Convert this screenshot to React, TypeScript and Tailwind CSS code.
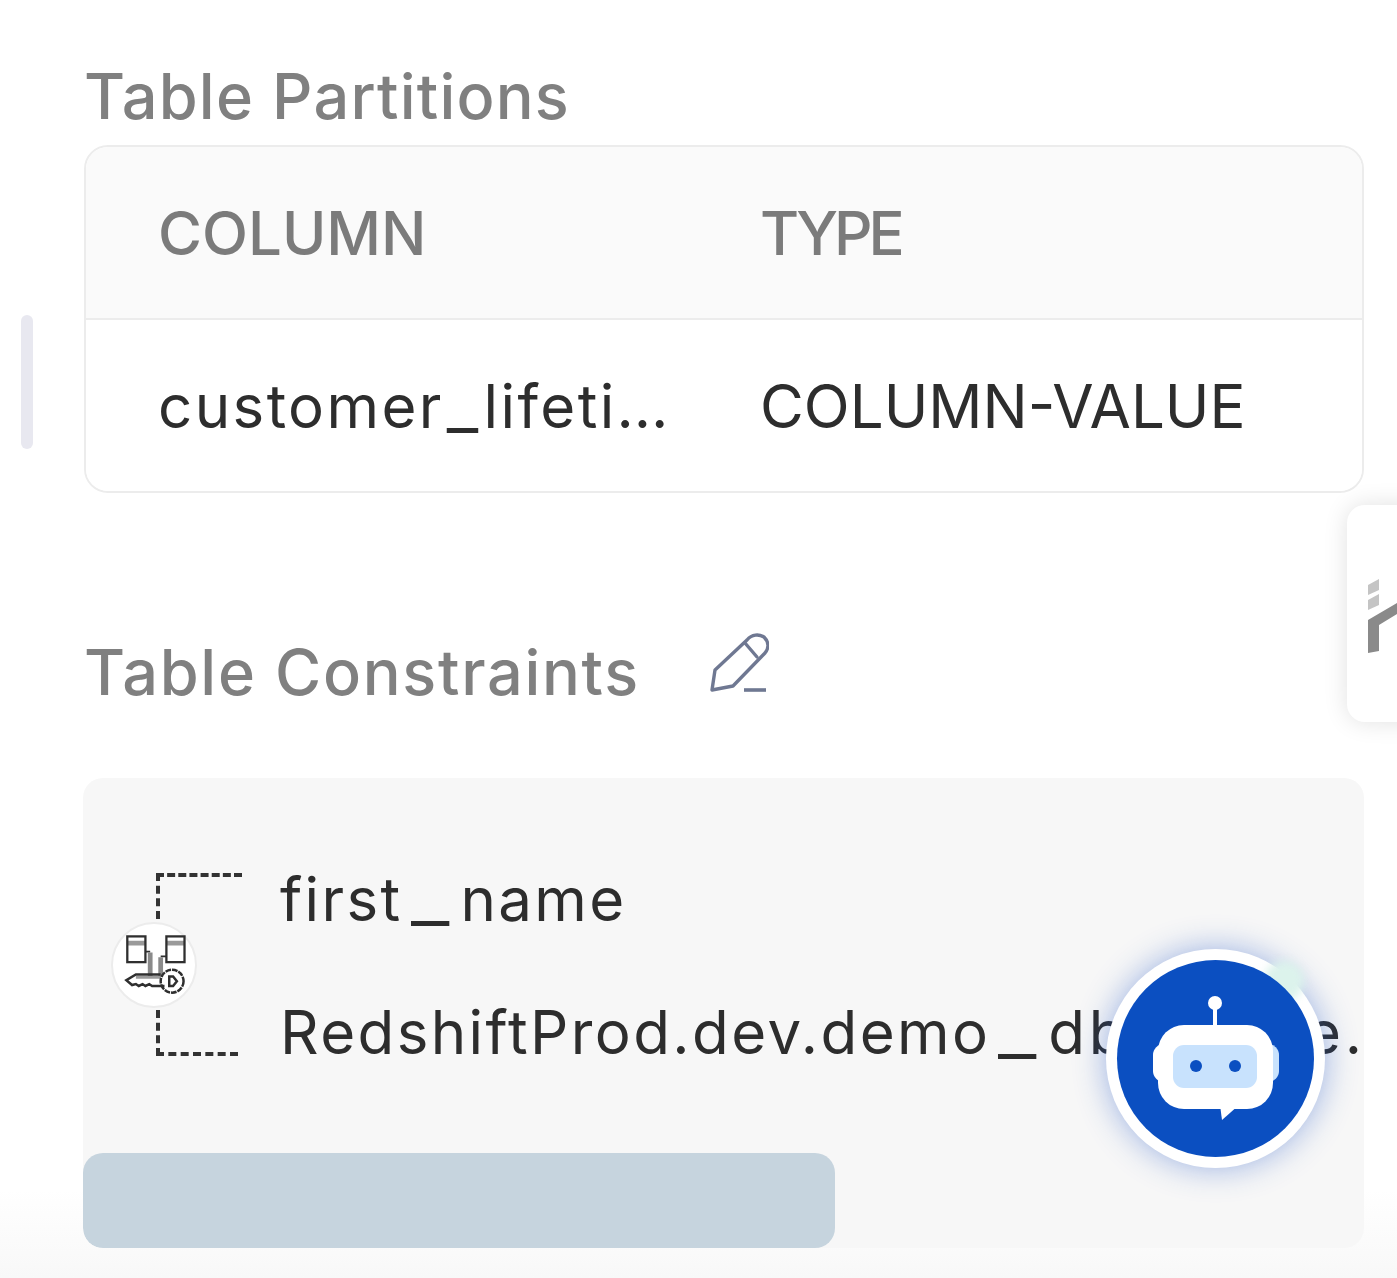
import React from 'react';

const font = "font-['Inter',sans-serif]";

const Underscore = () => <span className="inline-block mx-[14px] scale-x-[1.4]">_</span>;

const KeyIcon = () => (
  <svg viewBox="0 0 86 86" className="w-[86px] h-[86px]" fill="none" stroke="#2f2f2f" strokeWidth="2.4">
    {/* tables */}
    <path d="M15 20h19M56 20h19" stroke="#9a9a9a" strokeWidth="5" />
    <rect x="15" y="13" width="19" height="27" />
    <rect x="56" y="13" width="19" height="27" />
    {/* wires */}
    <path d="M34 29h5M56 34h-6" strokeWidth="2" />
    <path d="M39 30v25M50 35v20" stroke="#8a8a8a" strokeWidth="5" />
    {/* key */}
    <path d="M50 53H24L14 59l6 5 4-1 3 2 4-2 3 2 4-2 3 2h13" strokeWidth="2.6" />
    <path d="M24 56H50" stroke="#9a9a9a" strokeWidth="3" />
    <circle cx="62" cy="60" r="12" strokeWidth="2.6" strokeDasharray="6 1" />
    <path d="M59 55h4l4 5-4 5h-4z" strokeWidth="2.6" />
  </svg>
);

const PencilIcon = () => (
  <svg viewBox="0 0 60 62" className="w-[60px] h-[62px]" fill="none" stroke="#6f7892" strokeWidth="3.4" strokeLinejoin="round" strokeLinecap="round">
    <path d="M3 57L6 37L38 7C43 1 50 1 55 4C60 9 60 15 56 20L24 53Z" />
    <path d="M36 10L48 24" />
    <path d="M35 57H57" strokeWidth="3.6" strokeLinecap="butt" />
  </svg>
);

const BotIcon = () => (
  <svg viewBox="0 0 197 197" className="w-[197px] h-[197px]">
    {/* antenna */}
    <circle cx="98" cy="43" r="7" fill="white" />
    <rect x="96" y="43" width="4" height="24" fill="white" />
    {/* ears */}
    <rect x="36" y="84" width="22" height="38" rx="11" fill="white" />
    <rect x="140" y="84" width="22" height="38" rx="11" fill="#c8e2fd" />
    {/* head */}
    <rect x="41" y="65" width="115" height="84" rx="26" fill="white" />
    <path d="M103 145L105 160L122 145Z" fill="white" />
    {/* screen */}
    <rect x="56" y="85" width="84" height="43" rx="11" fill="#c8e2fd" />
    <circle cx="79" cy="106" r="6" fill="#0b4fc1" />
    <circle cx="118" cy="106" r="6" fill="#0b4fc1" />
  </svg>
);

export default function App() {
  return (
    <div className={`relative w-[1397px] h-[1278px] overflow-hidden bg-white ${font}`}>
      {/* bottom fade */}
      <div className="absolute left-0 right-0 bottom-0 h-[88px] bg-gradient-to-b from-[#f8f8f8]/0 to-[#f8f8f8]"></div>

      <div className="relative pl-[84px] pr-[33px] pt-[58px]">
        <h3 className="text-[63px] leading-[76px] font-medium text-[#808080] tracking-[1.2px] mb-[11px]">Table Partitions</h3>

        {/* Partitions table */}
        <div className="border-2 border-[#ececec] rounded-[24px] overflow-hidden">
          <div className="grid grid-cols-[602px_1fr] h-[173px] items-center bg-[#fafafa] border-b-2 border-[#ececec] px-[72px] text-[60px] font-medium text-[#7b7b7b]">
            <span>COLUMN</span>
            <span className="-tracking-[4px]">TYPE</span>
          </div>
          <div className="grid grid-cols-[602px_1fr] h-[171px] items-center bg-white px-[72px] text-[60px] text-[#2d2d2d]">
            <span className="whitespace-nowrap tracking-[2.4px]">customer<span className="inline-block mx-[5px] scale-x-[1.15]">_</span>lifeti…</span>
            <span>COLUMN-VALUE</span>
          </div>
        </div>

        {/* Constraints header */}
        <div className="flex items-center gap-[69px] mt-[141px] h-[76px]">
          <h3 className="text-[63px] leading-[76px] font-medium text-[#808080] tracking-[1.7px]">Table Constraints</h3>
          <div className="mb-[16px]">
            <PencilIcon />
          </div>
        </div>

        {/* Constraints card */}
        <div className="mt-[68px] h-[470px] bg-[#f7f7f7] rounded-[20px] overflow-hidden flex flex-col justify-between -ml-px">
          <div className="flex pt-[87px]">
            <div className="relative w-[197px] shrink-0">
              <div className="absolute left-[73px] top-[8px] w-[86px] h-[46px] border-l-4 border-t-4 border-dashed border-[#333]"></div>
              <div className="absolute left-[73px] top-[145px] w-[82px] h-[46px] border-l-4 border-b-4 border-dashed border-[#333]"></div>
              <div className="absolute left-[28px] top-[57px] w-[86px] h-[86px] rounded-full bg-white border-2 border-[#ececec] flex items-center justify-center">
                <KeyIcon />
              </div>
            </div>
            <div className="flex flex-col gap-[65px] text-[60px] leading-[68px] text-[#2d2d2d] whitespace-nowrap tracking-[2.4px]">
              <span>first<Underscore />name</span>
              <span>RedshiftProd.dev.demo<Underscore /><span className="tracking-[3.8px]">db.stable.</span></span>
            </div>
          </div>
          <div className="w-[752px] h-[95px] bg-[#c6d4de] rounded-[20px]"></div>
        </div>
      </div>

      {/* left scroll handle */}
      <div className="absolute left-[21px] top-[315px] w-[12px] h-[134px] rounded-full bg-[#e8e8f0]"></div>

      {/* side tab */}
      <div className="absolute left-[1347px] top-[505px] w-[80px] h-[217px] bg-white rounded-l-[18px] shadow-[0_0_24px_rgba(0,0,0,0.12)]">
        <svg viewBox="0 0 30 90" className="absolute left-[20px] top-[74px] w-[30px] h-[90px]" fill="#8a8a8a">
          <path d="M1 6L12 0V11L1 16Z" fill="#c4c4c4" />
          <path d="M1 21L12 15V26L1 31Z" fill="#c4c4c4" />
          <path d="M1 41L30 24V35L12 46V72L1 74Z" />
        </svg>
      </div>

      {/* chat bot button */}
      <div className="absolute left-[1106px] top-[949px] w-[219px] h-[219px] rounded-full bg-white shadow-[0_0_32px_rgba(40,90,200,0.45)] flex items-center justify-center">
        <div className="absolute left-[158px] top-[12px] w-[40px] h-[40px] rounded-full bg-[#dcf3ec] blur-[4px]"></div>
        <div className="relative w-[197px] h-[197px] rounded-full bg-[#0b4fc1]">
          <BotIcon />
        </div>
      </div>
    </div>
  );
}
